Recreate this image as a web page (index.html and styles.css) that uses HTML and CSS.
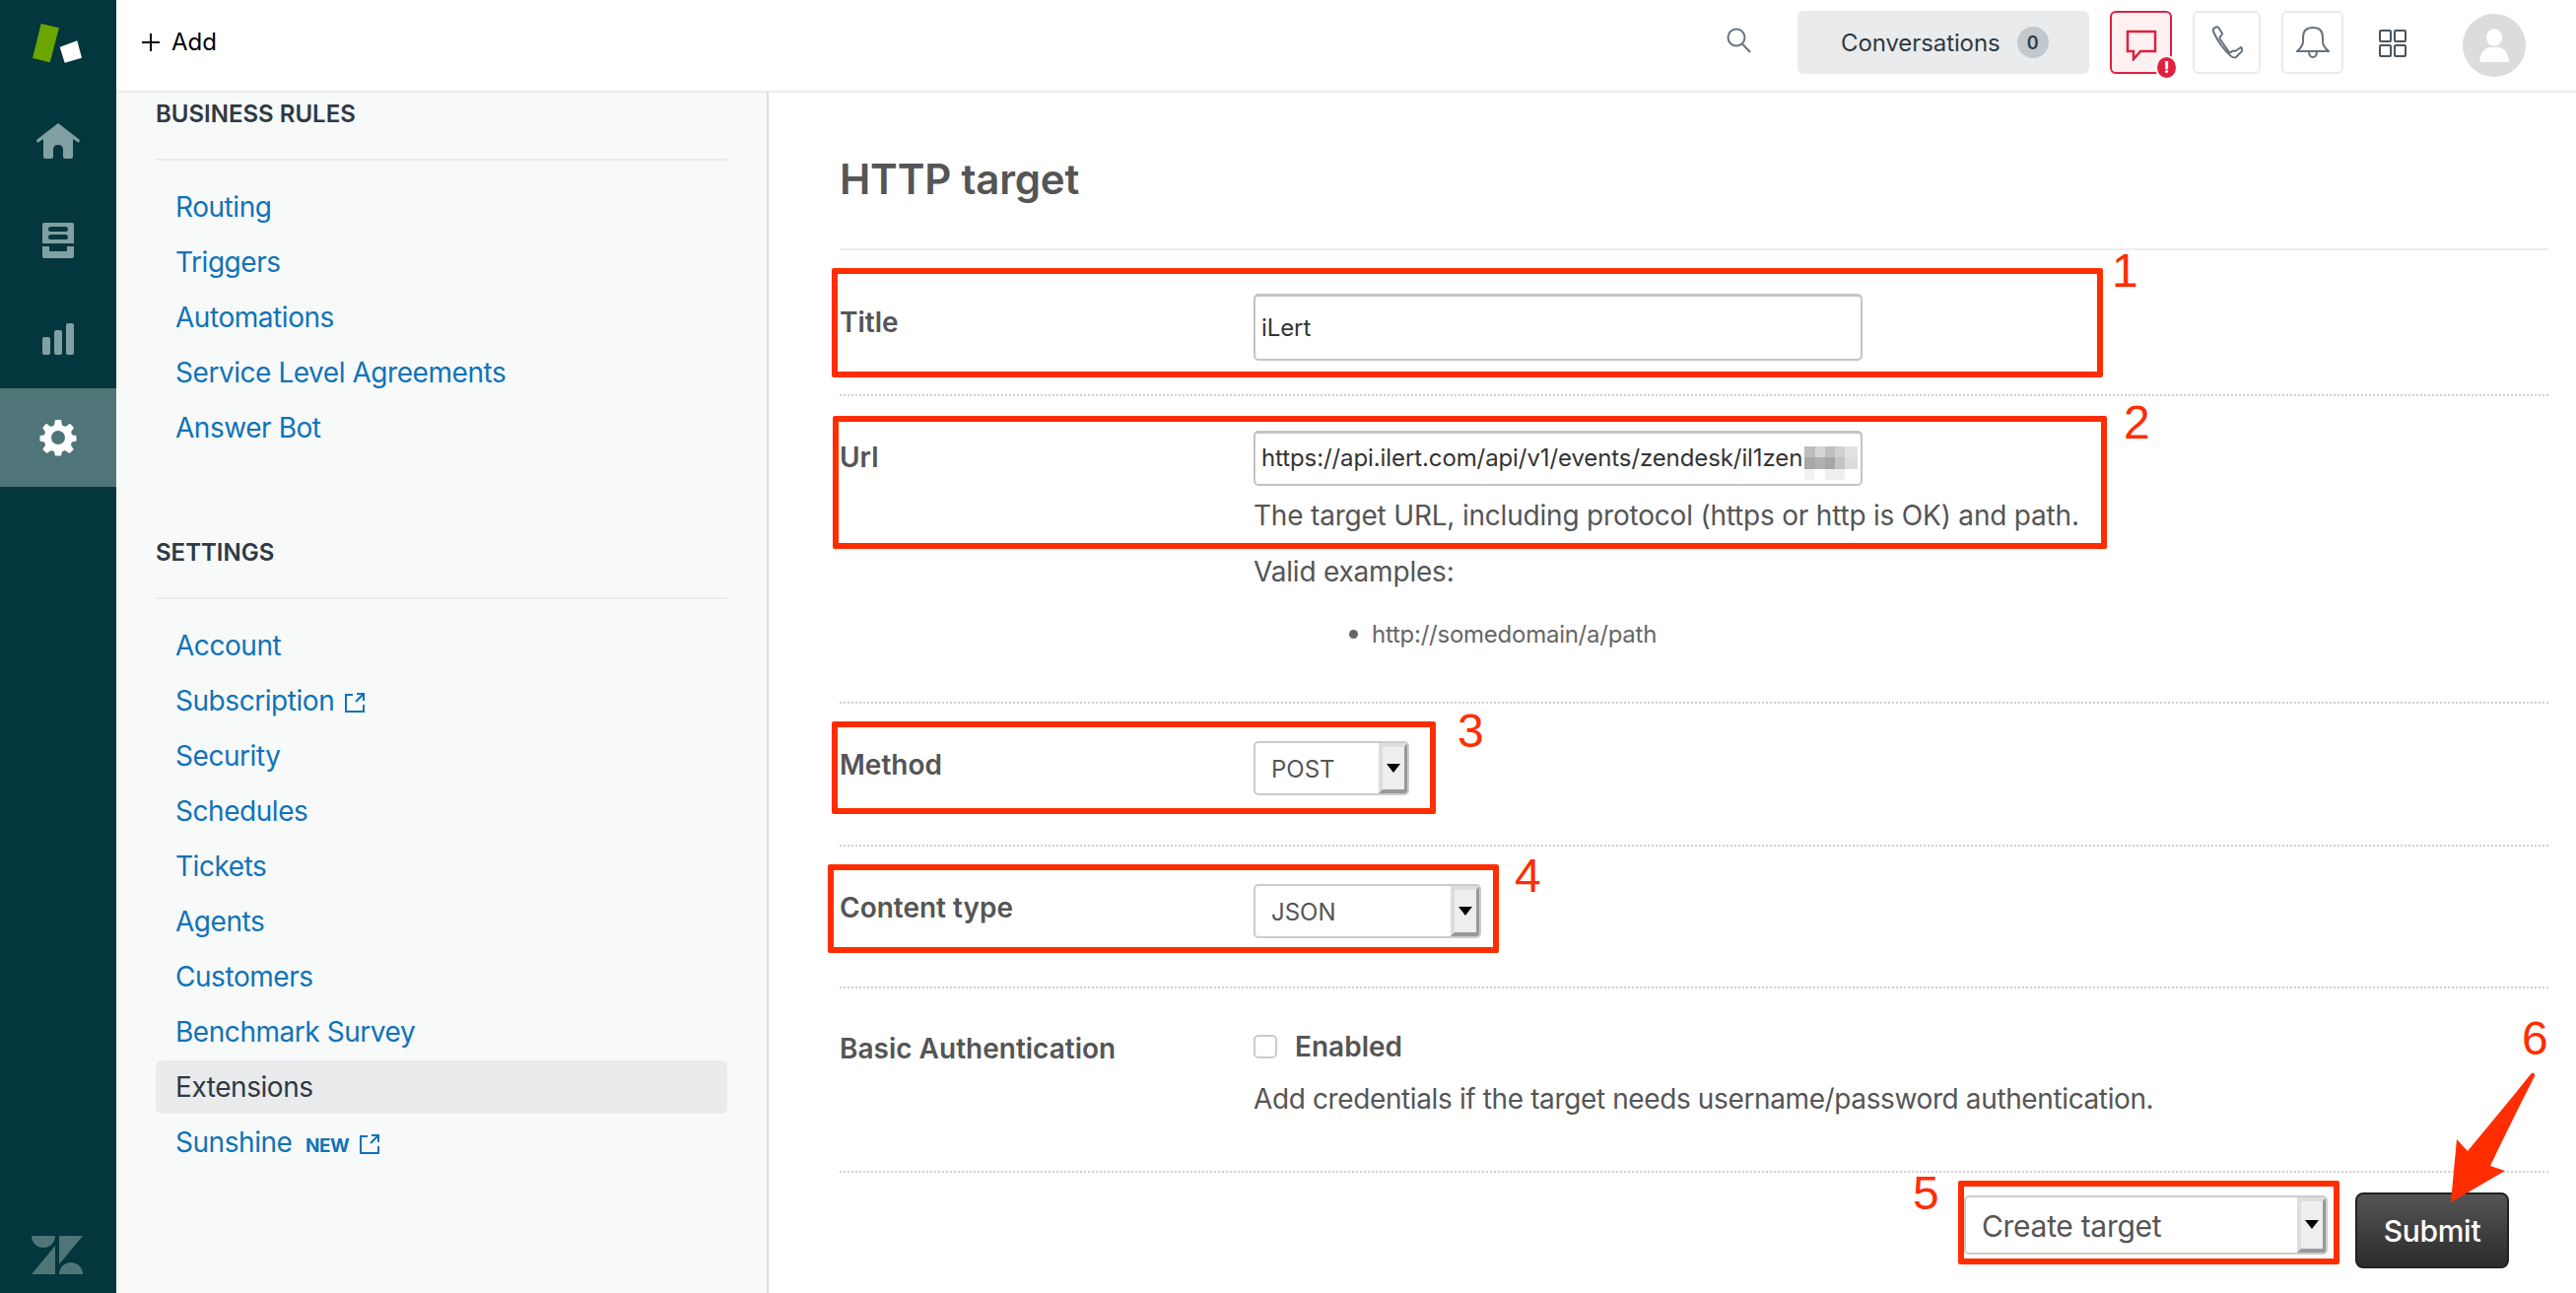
FILE: index.html
```html
<!DOCTYPE html>
<html lang="en">
<head>
<meta charset="utf-8">
<title>HTTP target</title>
<link rel="stylesheet" href="styles.css">
</head>
<body>
<div class="app">
  <nav class="rail">
    <svg class="logo" width="118" height="94" viewBox="0 0 118 94"><polygon points="41.7,24 60,28.3 50.7,63.3 33,59" fill="#6ba500"/><polygon points="60.7,47.7 78.3,41.3 83,58.7 65.7,63.7" fill="#fff"/></svg>
    <div class="rail-item"><svg width="46" height="38" viewBox="0 0 46 38"><path d="M23 0 L45 17 L44 20 L38 16 V34 Q38 36 36 36 H30 Q28 36 28 34 V27 Q28 22 23 22 Q18 22 18 27 V34 Q18 36 16 36 H10 Q8 36 8 34 V16 L2 20 L1 17 Z" fill="#81a0a3"/></svg></div>
    <div class="rail-item"><svg width="32" height="36" viewBox="0 0 32 36"><path fill-rule="evenodd" d="M2 0H30Q32 0 32 2V24H0V2Q0 0 2 0ZM8 4Q6 4 6 6.500Q6 9 8 9H24Q26 9 26 6.500Q26 4 24 4ZM8 12Q6 12 6 14.500Q6 17 8 17H24Q26 17 26 14.500Q26 12 24 12Z" fill="#81a0a3"/><path d="M0 24H7V29H25V24H32V34Q32 36 30 36H2Q0 36 0 34Z" fill="#81a0a3"/><rect y="21" width="32" height="3" fill="#03363d"/></svg></div>
    <div class="rail-item"><svg width="32" height="32" viewBox="0 0 32 32" fill="#81a0a3"><rect y="14" width="8" height="18" rx="2"/><rect x="12" y="7" width="8" height="25" rx="2"/><rect x="24" width="8" height="32" rx="2"/></svg></div>
    <div class="rail-item rail-active"><svg width="38" height="38" viewBox="0 0 38 38"><path fill-rule="evenodd" fill="#fff" d="M16 1H22L23 6.500L26.500 8L31 4.800L35 9L32 13.500L33.500 16.500L37.500 17V22.500L33 23.500L31.800 26.500L34.800 31L30.500 35L26 32L23 33.200L22 37.500H16L15 33.200L12 32L7.500 35L3.200 31L6.200 26.500L5 23.500L0.500 22.500V17L4.800 16.500L6 13.500L3.200 9L7 4.800L11.500 8L15 6.500ZM19 12A7 7 0 1 0 19 26A7 7 0 1 0 19 12Z"/></svg></div>
    <svg class="zen" width="52" height="39" viewBox="0 0 52 39" fill="#4f7579"><path d="M0 0H24A12 12 0 0 1 0 0Z"/><path d="M28 0H52L28 29Z"/><path d="M24 10V39H0Z"/><path d="M28 39A12 12 0 0 1 52 39Z"/></svg>
  </nav>
  <div class="content">
    <header class="topbar">
      <div class="add"><svg width="18" height="18" viewBox="0 0 18 18"><path d="M9 0V18M0 9H18" stroke="#000" stroke-width="2"/></svg><span>Add</span></div>
      <div class="top-right">
        <svg class="search" width="26" height="26" viewBox="0 0 26 26" fill="none" stroke="#68737d" stroke-width="2"><circle cx="10" cy="10" r="8.500"/><path d="M16 16.500L24 25"/></svg>
        <div class="conv"><span>Conversations</span><span class="count">0</span></div>
        <div class="tbtn tbtn-chat">
          <svg width="32" height="32" viewBox="0 0 32 32" fill="none" stroke="#e0203f" stroke-width="2.500"><path d="M2 2H30V22H15L8 30V22H2Z"/></svg>
          <span class="alert">!</span>
        </div>
        <div class="tbtn tbtn-phone"><svg width="32" height="34" viewBox="0 0 32 34" fill="none" stroke="#68737d" stroke-width="2"><path d="M2 6Q1 3 4 2Q6 0 8 3L11 8Q11 10 9 11Q8 12 9 14L18 27Q19 28 21 26Q23 25 24 26L30 22Q32 24 31 26L26 31Q24 34 20 31Q15 27 10 20Q5 13 2 6Z"/></svg></div>
        <div class="tbtn tbtn-bell"><svg width="34" height="32" viewBox="0 0 34 32" fill="none" stroke="#68737d" stroke-width="2"><path d="M1 25H33Q28 21 27 16V11Q27 1 17 1Q7 1 7 11V16Q6 21 1 25Z"/><path d="M13 25Q13 31 17 31Q21 31 21 25"/></svg></div>
        <svg class="apps" width="28" height="28" viewBox="0 0 28 28" fill="none" stroke="#49545c" stroke-width="2"><rect x="1" y="1" width="11" height="11" rx="1"/><rect x="16" y="1" width="11" height="11" rx="1"/><rect x="1" y="16" width="11" height="11" rx="1"/><rect x="16" y="16" width="11" height="11" rx="1"/></svg>
        <div class="avatar"><svg width="30" height="34" viewBox="0 0 30 34" fill="#fff"><ellipse cx="15" cy="9" rx="8" ry="9"/><path d="M0 34Q1 21 10 19H20Q29 21 30 34Z"/></svg></div>
      </div>
    </header>
    <div class="body">
      <aside class="panel">
        <h3 class="panel-title">BUSINESS RULES</h3>
        <ul class="menu">
          <li><a>Routing</a></li>
          <li><a>Triggers</a></li>
          <li><a>Automations</a></li>
          <li><a>Service Level Agreements</a></li>
          <li><a>Answer Bot</a></li>
        </ul>
        <h3 class="panel-title panel-title-2">SETTINGS</h3>
        <ul class="menu">
          <li><a>Account</a></li>
          <li><a>Subscription <svg class="ext" width="22" height="22" viewBox="0 0 22 22" fill="none" stroke="#0f73b8" stroke-width="2"><path d="M9 3H2V20H20V13M12 10L20 2M13 2H20V9"/></svg></a></li>
          <li><a>Security</a></li>
          <li><a>Schedules</a></li>
          <li><a>Tickets</a></li>
          <li><a>Agents</a></li>
          <li><a>Customers</a></li>
          <li><a>Benchmark Survey</a></li>
          <li class="active"><a>Extensions</a></li>
          <li><a>Sunshine <span class="new">NEW</span> <svg class="ext" width="22" height="22" viewBox="0 0 22 22" fill="none" stroke="#0f73b8" stroke-width="2"><path d="M9 3H2V20H20V13M12 10L20 2M13 2H20V9"/></svg></a></li>
        </ul>
      </aside>
      <main class="main">
        <h1 class="title">HTTP target</h1>
        <section class="row row-title">
          <div class="label">Title</div>
          <div class="field"><div class="input input-tall">iLert</div></div>
        </section>
        <section class="row row-url">
          <div class="label">Url</div>
          <div class="field">
            <div class="input input-url">https://api.ilert.com/api/v1/events/zendesk/il1zen
              <svg class="blur" width="54" height="34" viewBox="0 0 54 34"><rect width="54" height="34" fill="#fff"/><rect x="0" y="0" width="11" height="11" fill="#bdbdbd"/><rect x="11" y="0" width="10" height="11" fill="#d6d6d6"/><rect x="21" y="0" width="10" height="11" fill="#bfbfbf"/><rect x="31" y="0" width="10" height="11" fill="#d0d0d0"/><rect x="41" y="0" width="13" height="11" fill="#e2e2e2"/><rect x="0" y="11" width="11" height="12" fill="#a8a8a8"/><rect x="11" y="11" width="10" height="12" fill="#b0b0b0"/><rect x="21" y="11" width="10" height="12" fill="#a6a6a6"/><rect x="31" y="11" width="10" height="12" fill="#c4c4c4"/><rect x="41" y="11" width="13" height="12" fill="#dcdcdc"/><rect x="0" y="23" width="10" height="11" fill="#f2f2f2"/><rect x="21" y="23" width="20" height="11" fill="#efefef"/></svg>
            </div>
            <p class="help help-first">The target URL, including protocol (https or http is OK) and path.</p>
            <p class="help help-valid">Valid examples:</p>
            <ul class="examples"><li>http://somedomain/a/path</li></ul>
          </div>
        </section>
        <section class="row row-method">
          <div class="label">Method</div>
          <div class="field"><div class="select select-method"><span class="select-text">POST</span><span class="arrow"></span></div></div>
        </section>
        <section class="row row-content">
          <div class="label">Content type</div>
          <div class="field"><div class="select select-content"><span class="select-text">JSON</span><span class="arrow"></span></div></div>
        </section>
        <section class="row row-basic">
          <div class="label">Basic Authentication</div>
          <div class="field">
            <div class="check"><span class="box"></span><span class="check-label">Enabled</span></div>
            <p class="help help-auth">Add credentials if the target needs username/password authentication.</p>
          </div>
        </section>
        <div class="actions">
          <div class="select select-action"><span class="select-text">Create target</span><span class="arrow"></span></div>
          <div class="submit">Submit</div>
        </div>
      </main>
    </div>
  </div>
</div>
<div class="notes">
  <div class="mark m1"></div>
  <div class="mark m2"></div>
  <div class="mark m3"></div>
  <div class="mark m4"></div>
  <div class="mark m5"></div>
  <span class="num n1">1</span>
  <span class="num n2">2</span>
  <span class="num n3">3</span>
  <span class="num n4">4</span>
  <span class="num n5">5</span>
  <span class="num n6">6</span>
  <svg class="pointer" width="100" height="140" viewBox="2480 1085 100 140"><path d="M2487 1220L2493 1156L2504 1168Q2540 1125 2568 1090Q2572 1086 2572 1092Q2550 1135 2527 1183L2542 1188Z" fill="#ff2d00"/></svg>
</div>
</body>
</html>
```
FILE: styles.css
```css
* { box-sizing: border-box; }
html, body { margin: 0; padding: 0; height: 100%; overflow: hidden; background: #fff; }
body { font-family: Inter, "Liberation Sans", sans-serif; color: #555; position: relative; }
h1, h3, p, ul { margin: 0; padding: 0; }
ul { list-style: none; }

.app { display: flex; width: 2614px; height: 1312px; }

.rail { width: 118px; flex: none; background: #03363d; display: flex; flex-direction: column; position: relative; }
.logo { display: block; margin-bottom: 0; }
.rail-item { height: 100px; display: flex; align-items: center; justify-content: center; }
.rail-active { background: #4f7579; }
.zen { margin: auto 0 19px 32px; display: block; }

.content { flex: 1; display: flex; flex-direction: column; min-width: 0; }
.topbar { height: 94px; flex: none; border-bottom: 2px solid #e9ebed; display: flex; align-items: flex-start; justify-content: space-between; background: #fff; }
.add { display: flex; align-items: center; gap: 12px; margin: 27px 0 0 26px; font-size: 24px; line-height: 32px; color: #000; }
.top-right { display: flex; align-items: flex-start; padding-right: 51px; }
.search { margin: 28px 46px 0 0; }
.conv { width: 296px; height: 64px; margin-top: 11px; background: #e9ebed; border-radius: 6px; display: flex; align-items: center; padding-left: 44px; font-size: 24px; letter-spacing: -0.1px; color: #2f3941; gap: 17px; }
.count { width: 32px; height: 32px; border-radius: 50%; background: #c2c8cc; font-size: 18px; font-weight: 600; display: flex; align-items: center; justify-content: center; }
.tbtn { height: 64px; margin: 11px 0 0 21px; border: 2px solid #e9ebed; border-radius: 6px; display: flex; align-items: center; justify-content: center; position: relative; }
.tbtn-chat { width: 63px; border-color: #e0203f; background: #fff0f1; }
.tbtn-phone { width: 69px; }
.tbtn-bell { width: 63px; }
.tbtn-chat svg { margin-top: 6px; }
.alert { position: absolute; right: -8px; bottom: -8px; width: 23px; height: 25px; background: #e0203f; border: 2px solid #fff; border-radius: 50%; color: #fff; font-size: 16px; font-weight: 800; line-height: 21px; text-align: center; }
.apps { margin: 30px 0 0 36px; }
.avatar { width: 64px; height: 64px; margin: 14px 0 0 57px; border-radius: 50%; background: #dcdcdc; display: flex; align-items: center; justify-content: center; }

.body { flex: 1; display: flex; min-height: 0; }
.panel { width: 662px; flex: none; background: #f8f9f9; border-right: 2px solid #ddd; padding: 0 40px 0 40px; }
.panel-title { height: 69px; padding-top: 2px; line-height: 40px; font-size: 24px; font-weight: 600; color: #2f3941; border-bottom: 2px solid #e9ebed; }
.panel-title-2 { margin-top: 77px; }
.menu { margin-top: 19px; }
.menu li { height: 56px; padding: 1px 0; }
.menu a { display: block; height: 54px; line-height: 54px; padding-left: 20px; font-size: 28px; letter-spacing: -0.45px; color: #0f73b8; }
.active a { background: #e9ebed; border-radius: 6px; color: #2f3941; }
.ext { margin-left: 2px; vertical-align: -3px; }
.new { font-size: 19px; font-weight: 700; margin-left: 6px; }

.main { flex: 1; padding: 0 28px 0 72px; min-width: 0; }
.title { height: 160px; padding-top: 68px; font-size: 42px; line-height: 40px; font-weight: 600; letter-spacing: -0.2px; color: #555; border-bottom: 2px solid #eee; }
.row { display: grid; grid-template-columns: 420px 1fr; border-bottom: 2px dotted #d0d0d0; align-items: start; }
.label { font-size: 28px; line-height: 40px; font-weight: 600; color: #555; margin-top: 42px; }
.row-title { height: 148px; }
.row-title .label { margin-top: 53px; }
.row-title .field { padding-top: 44px; }
.row-url { height: 312px; }
.row-url .field { padding-top: 35px; }
.row-method { height: 145px; }
.row-method .field { padding-top: 38px; }
.row-content { height: 144px; }
.row-content .field { padding-top: 38px; }
.row-basic { height: 187px; }
.row-basic .label { margin-top: 41px; }
.row-basic .field { padding-top: 39px; }

.input { width: 618px; border: 2px solid #c4c4c4; border-top-width: 3px; border-radius: 5px; padding-left: 6px; font-size: 24px; letter-spacing: -0.1px; color: #333; background: #fff; position: relative; white-space: nowrap; overflow: hidden; }
.input-tall { height: 68px; line-height: 64px; }
.input-url { height: 56px; line-height: 50px; }
.blur { position: absolute; right: 3px; top: 13px; }
.help { font-size: 28px; line-height: 40px; color: #555; }
.help-first { margin-top: 10px; letter-spacing: -0.2px; }
.help-valid { margin-top: 17px; letter-spacing: -0.2px; }
.examples { margin: 24px 0 0 120px; font-size: 24px; letter-spacing: -0.25px; line-height: 40px; color: #666; }
.examples li { position: relative; }
.examples li::before { content: ""; position: absolute; left: -23px; top: 15px; width: 9px; height: 9px; border-radius: 50%; background: #666; }
.help-auth { margin-top: 13px; letter-spacing: -0.38px; }

.select { border: 2px solid #ccc; border-radius: 5px; height: 55px; display: flex; justify-content: space-between; background: #fff; font-size: 24px; color: #555; overflow: hidden; }
.select-method { width: 158px; }
.select-content { width: 231px; }
.select-action { width: 369px; height: 60px; font-size: 30px; letter-spacing: -0.3px; margin-top: 23px; }
.select-text { padding-left: 16px; line-height: 54px; }
.select-action .select-text { line-height: 58px; }
.arrow { width: 29px; background: #eee; border-left: 4px solid #ddd; border-top: 4px solid #ddd; border-right: 3px solid #999; border-bottom: 4px solid #999; position: relative; flex: none; }
.arrow::after { content: ""; position: absolute; left: 4px; top: 50%; margin-top: -5px; border-left: 7px solid transparent; border-right: 7px solid transparent; border-top: 9px solid #000; }

.check { display: flex; align-items: center; gap: 18px; height: 40px; }
.box { width: 24px; height: 24px; border: 2px solid #ccc; border-radius: 5px; background: #fff; }
.check-label { font-size: 28px; font-weight: 600; color: #555; }

.actions { display: flex; justify-content: flex-end; gap: 28px; padding-right: 40px; align-items: flex-start; }
.submit { width: 156px; height: 77px; margin-top: 20px; border-radius: 8px; background: linear-gradient(#555, #2b2b2b); border: 2px solid #222; color: #fff; font-size: 30px; font-weight: 500; letter-spacing: -0.3px; display: flex; align-items: center; justify-content: center; }

.notes { position: absolute; left: 0; top: 0; width: 2614px; height: 1312px; pointer-events: none; }
.mark { position: absolute; border: 6px solid #ff2d00; border-radius: 2px; }
.m1 { left: 844px; top: 272px; width: 1290px; height: 111px; }
.m2 { left: 845px; top: 422px; width: 1293px; height: 135px; }
.m3 { left: 844px; top: 732px; width: 613px; height: 94px; }
.m4 { left: 840px; top: 877px; width: 681px; height: 90px; }
.m5 { left: 1987px; top: 1198px; width: 387px; height: 85px; }
.num { position: absolute; font-family: "Liberation Sans", sans-serif; font-size: 48px; line-height: 48px; color: #ff2d00; }
.n1 { left: 2143px; top: 251px; }
.n2 { left: 2155px; top: 405px; }
.n3 { left: 1479px; top: 718px; }
.n4 { left: 1537px; top: 865px; }
.n5 { left: 1941px; top: 1187px; }
.n6 { left: 2559px; top: 1030px; }
.pointer { position: absolute; left: 2480px; top: 1085px; }
```
